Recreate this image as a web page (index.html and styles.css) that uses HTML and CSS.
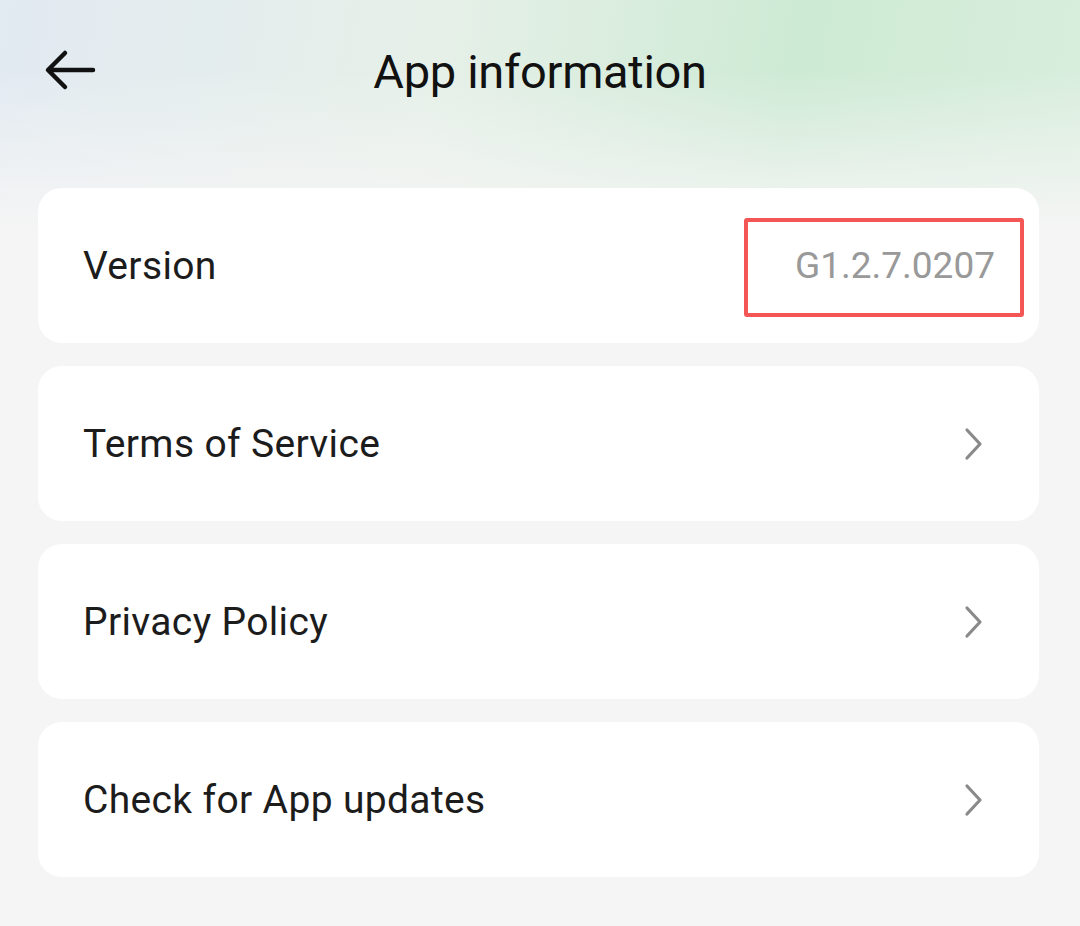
FILE: index.html
```html
<!DOCTYPE html>
<html>
<head>
<meta charset="utf-8">
<link rel="stylesheet" href="styles.css">
</head>
<body>
<div class="page">
  <header class="topbar">
    <span class="back">
      <svg width="52" height="44" viewBox="0 0 52 44"><path d="M49 22 H5 M21 5 L4 22 L21 39" fill="none" stroke="#111" stroke-width="4.5" stroke-linecap="round" stroke-linejoin="round"/></svg>
    </span>
    <h1 class="title">App information</h1>
  </header>
  <main class="list">
    <div class="card">
      <span class="label">Version</span>
      <span class="value">G1.2.7.0207</span>
    </div>
    <div class="card">
      <span class="label">Terms of Service</span>
      <svg class="chev" width="22" height="34" viewBox="0 0 22 34"><path d="M4 3 L17 17 L4 31" fill="none" stroke="#8a8a8a" stroke-width="3.2" stroke-linecap="round" stroke-linejoin="round"/></svg>
    </div>
    <div class="card">
      <span class="label">Privacy Policy</span>
      <svg class="chev" width="22" height="34" viewBox="0 0 22 34"><path d="M4 3 L17 17 L4 31" fill="none" stroke="#8a8a8a" stroke-width="3.2" stroke-linecap="round" stroke-linejoin="round"/></svg>
    </div>
    <div class="card">
      <span class="label">Check for App updates</span>
      <svg class="chev" width="22" height="34" viewBox="0 0 22 34"><path d="M4 3 L17 17 L4 31" fill="none" stroke="#8a8a8a" stroke-width="3.2" stroke-linecap="round" stroke-linejoin="round"/></svg>
    </div>
  </main>
</div>
</body>
</html>
```
FILE: styles.css
```css
html, body {
  margin: 0;
  padding: 0;
}
body {
  width: 1080px;
  height: 926px;
  overflow: hidden;
  background: #f5f5f5;
  font-family: Roboto, "Noto Sans", sans-serif;
  color: #1a1a1a;
}
.page {
  height: 926px;
  background:
    linear-gradient(180deg, rgba(245,245,245,0) 0px, rgba(245,245,245,0) 70px, #f5f5f5 230px),
    linear-gradient(100deg, #e2eaf2 0%, #e6f0e8 40%, #cdead4 72%, #d9eedd 100%);
  background-repeat: no-repeat;
  background-size: 1080px 240px, 1080px 240px;
  background-color: #f5f5f5;
}
.topbar {
  height: 144px;
  position: relative;
  display: flex;
  align-items: center;
  justify-content: center;
}
.back {
  position: absolute;
  left: 44px;
  top: 48px;
  display: flex;
}
.title {
  margin: 0;
  margin-top: -2px;
  font-weight: 400;
  font-size: 47px;
  letter-spacing: -0.3px;
  color: #111;
}
.list {
  display: flex;
  flex-direction: column;
  gap: 23px;
  padding: 44px 41px 0 38px;
}
.card {
  height: 155px;
  background: #fff;
  border-radius: 24px;
  display: flex;
  align-items: center;
  justify-content: space-between;
  padding: 0 54px 0 45px;
  box-sizing: border-box;
}
.label {
  font-size: 39px;
  letter-spacing: 0.35px;
  color: #1c1c1c;
}
.value {
  font-size: 37px;
  color: #999;
  position: relative;
  margin-right: -10px;
}
.value::after {
  content: "";
  position: absolute;
  left: -51px;
  right: -29px;
  top: -26px;
  bottom: -30px;
  border: 4px solid #f45555;
  border-radius: 3px;
}
.chev {
  display: block;
}
```
